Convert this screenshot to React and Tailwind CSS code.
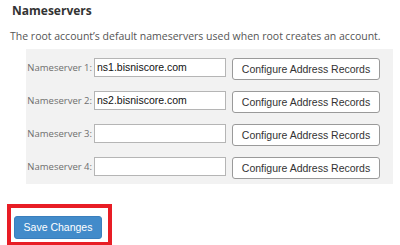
import React from "react";

const rows = [
  { label: "Nameserver 1:", value: "ns1.bisniscore.com" },
  { label: "Nameserver 2:", value: "ns2.bisniscore.com" },
  { label: "Nameserver 3:", value: "" },
  { label: "Nameserver 4:", value: "" },
];

export default function App() {
  return (
    <div className="w-[400px] h-[245px] bg-white overflow-hidden font-['Open_Sans',sans-serif]">
      <div className="pl-[12px] pt-[3px] text-[12px] leading-[16px] font-bold text-[#333]">
        Nameservers
      </div>
      <p className="pl-[10px] mt-[10px] text-[10.5px] leading-[14px] text-[#555]">
        The root account’s default nameservers used when root creates an account.
      </p>
      <div className="ml-[26px] mr-[7px] mt-[6px] bg-[#f2f2f2] pt-[9px] pb-[5px] flex flex-col gap-[11px]">
        {rows.map((r) => (
          <div key={r.label} className="flex items-start">
            <div className="w-[68px] pr-[2px] text-right text-[9.5px] leading-[19px] text-[#6e6e6e] whitespace-nowrap">
              {r.label}
            </div>
            <div className="w-[132px] h-[19px] border border-[#b5b5b5] bg-white pl-[2px] text-[10.5px] leading-[17px] text-[#111] font-['Liberation_Sans',Arial,sans-serif]">
              {r.value}
            </div>
            <button className="ml-[6px] w-[148px] h-[22px] border border-[#9a9a9a] rounded-[3px] bg-white text-[10.5px] leading-[20px] text-[#333] font-['Liberation_Sans',Arial,sans-serif]">
              Configure Address Records
            </button>
          </div>
        ))}
      </div>
      <div className="ml-[7px] mt-[20px] w-[105px] h-[42px] border-4 border-[#e81d25] pl-[3px] pt-[5px]">
        <button className="w-[88px] h-[23px] rounded-[3px] bg-[#428bca] border border-[#3a7fbd] text-white text-[10.5px] leading-[21px] font-['Liberation_Sans',Arial,sans-serif]">
          Save Changes
        </button>
      </div>
    </div>
  );
}
